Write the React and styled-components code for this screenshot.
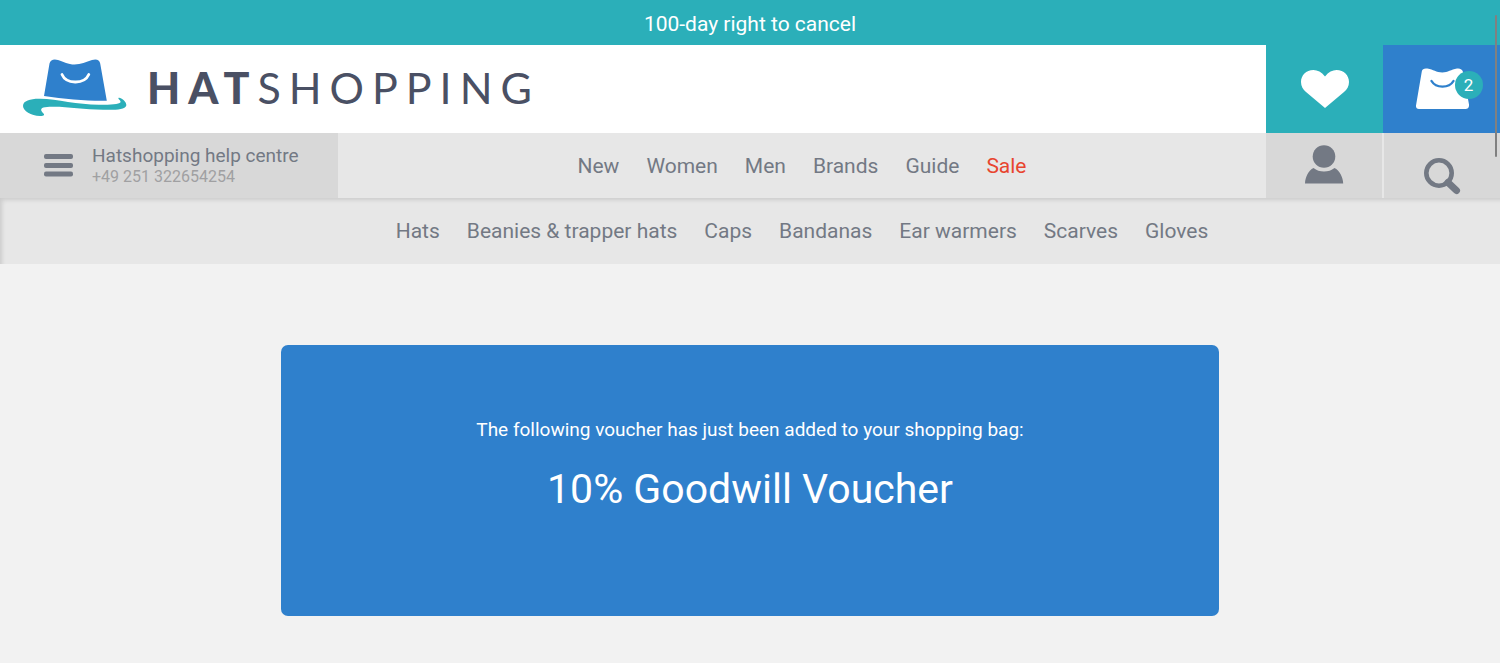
import React from "react";
import styled, { createGlobalStyle } from "styled-components";

const App = () => (
  <>
    <GlobalStyle />
    <Announcement>100-day right to cancel</Announcement>
    <Header>
      <Brand href="#" aria-label="Hatshopping">
        <HatLogo />
        <Wordmark>
          <b>HAT</b>SHOPPING
        </Wordmark>
      </Brand>
      <Tile color="#2bafb9" aria-label="Wishlist">
        <HeartIcon />
      </Tile>
      <Tile color="#2f80cc" aria-label="Shopping bag">
        <BagWrap>
          <BagIcon />
          <Count>2</Count>
        </BagWrap>
      </Tile>
    </Header>
    <Bar>
      <Help aria-label="Open menu">
        <MenuIcon />
        <span>
          <HelpTitle>Hatshopping help centre</HelpTitle>
          <HelpPhone>+49 251 322654254</HelpPhone>
        </span>
      </Help>
      <Nav aria-label="Main">
        {mainLinks.map(({ title, sale }) => (
          <NavLink key={title} href="#" $sale={sale}>
            {title}
          </NavLink>
        ))}
      </Nav>
      <Tools>
        <Tool aria-label="Account">
          <UserIcon />
        </Tool>
        <Tool aria-label="Search" $low>
          <SearchIcon />
        </Tool>
      </Tools>
    </Bar>
    <SubBar>
      <SubNav aria-label="Categories">
        {categories.map((title) => (
          <NavLink key={title} href="#">
            {title}
          </NavLink>
        ))}
      </SubNav>
    </SubBar>
    <Main>
      <Voucher>
        <Intro>The following voucher has just been added to your shopping bag:</Intro>
        <VoucherTitle>10% Goodwill Voucher</VoucherTitle>
      </Voucher>
    </Main>
    <ScrollThumb />
  </>
);
export default App;

const HatLogo = () => (
  <svg width="104" height="58" viewBox="0 0 104 58" aria-hidden="true">
    <path
      fill="#2f80cc"
      d="M26.500 4.500C27.500 .6 31 -.2 35 1C41 3 45 5.500 51.500 5.500C58 5.500 63 3 69 1C73.500 -.3 76.500 .8 77.200 4.500L83.800 41.800C66 42.300 42 40 21 37Z"
    />
    <path
      fill="none"
      stroke="#fff"
      strokeWidth="2.800"
      strokeLinecap="round"
      d="M39 15.500C43 25 61 26 65.800 15.500"
    />
    <path
      fill="#2bafb9"
      d="M0 47C0 41.500 8 39.600 17 39.800C35 40.200 55 46 77 45.800C88 45.800 96 45.400 97.500 43.300C98.300 41.600 95 40.600 95.400 39C96.600 37.400 104 42.500 103.300 46.500C102 51 92 51 80 50.800C58 50.600 38 46.500 22 48.300C17 49 17.500 51.500 20 54C22.500 56 20.500 57.200 17 57C8 56.500 0 52 0 47Z"
    />
  </svg>
);

const HeartIcon = () => (
  <svg width="50" height="38" viewBox="0 0 50 38" aria-hidden="true">
    <path
      fill="#fff"
      d="M25 6.500C21.500 2 17.500 0 13.500 0C6 0 1 5.500 1 12C1 16.500 3 19.500 6 22L25 38L44 22C47 19.500 49 16.500 49 12C49 5.500 44 0 36.500 0C32.500 0 28.500 2 25 6.500Z"
    />
  </svg>
);

const BagIcon = () => (
  <svg width="54" height="42" viewBox="0 0 54 42" aria-hidden="true">
    <path
      fill="#fff"
      d="M6.800 3.500C7.300 .8 9.500 .2 12.500 .6C18.500 1.500 21 4.500 27.300 4.500C33 4.500 36 1.500 42 .6C45 .2 47.500 1.500 48 4L54 36.500C54.300 39.500 53 41 50.500 41L4 41C1.800 41 .8 39.500 1 37.500Z"
    />
    <path
      fill="none"
      stroke="#2f80cc"
      strokeWidth="2.400"
      strokeLinecap="round"
      d="M16.500 13C21 20.500 34 20.500 38.500 13"
    />
  </svg>
);

const MenuIcon = () => (
  <svg width="30" height="24" viewBox="0 0 30 24" aria-hidden="true">
    <g fill="#737984">
      <rect width="29" height="5" y="0" rx="2" />
      <rect width="29" height="5" y="9" rx="2" />
      <rect width="29" height="5" y="17.500" rx="2" />
    </g>
  </svg>
);

const UserIcon = () => (
  <svg width="40" height="39" viewBox="0 0 40 39" aria-hidden="true">
    <g fill="#737984">
      <circle cx="20" cy="11.500" r="11.300" />
      <path d="M1 38.500C1.200 32 4.500 25.500 9.500 23C12.500 25.500 16 26.500 20 26.500C24 26.500 27.500 25.500 30.500 23C35.500 25.500 39 32 39.200 38.500Z" />
    </g>
  </svg>
);

const SearchIcon = () => (
  <svg width="38" height="37" viewBox="0 0 38 37" aria-hidden="true">
    <g fill="none" stroke="#737984">
      <circle cx="16" cy="15" r="12.700" strokeWidth="4.600" />
      <path d="M25 24.500L33.500 32.500" strokeWidth="7" strokeLinecap="round" />
    </g>
  </svg>
);

const GlobalStyle = createGlobalStyle`
  * {
    box-sizing: border-box;
  }

  body {
    margin: 0;
    background: #f2f2f2;
    font-family: Roboto, "Liberation Sans", sans-serif;
  }

  button {
    border: 0;
    padding: 0;
    font: inherit;
    cursor: pointer;
  }

  svg {
    display: block;
    flex-shrink: 0;
  }
`;

const Announcement = styled.div`
  padding: 12px 0 9px;
  background: #2bafb9;
  color: white;
  font-size: 21px;
  line-height: 24px;
  text-align: center;
`;

const Header = styled.header`
  display: flex;
  min-height: 88px;
  background: white;
`;

const Brand = styled.a`
  display: flex;
  flex: 1;
  align-items: center;
  gap: 20px;
  padding: 0 0 2px 23px;
  color: #4a5064;
  text-decoration: none;
`;

const Wordmark = styled.span`
  font-family: Lato, "Liberation Sans", sans-serif;
  font-size: 43px;
  font-weight: 400;
  line-height: 48px;
  letter-spacing: 8px;

  b {
    font-weight: 900;
  }
`;

const Tile = styled.button`
  display: flex;
  width: 117px;
  align-items: center;
  justify-content: center;
  background: ${({ color }) => color};
`;

const BagWrap = styled.span`
  position: relative;
`;

const Count = styled.span`
  position: absolute;
  top: 3px;
  right: -14px;
  width: 28px;
  border-radius: 50%;
  background: #2bafb9;
  color: white;
  font-size: 17px;
  line-height: 28px;
  text-align: center;
`;

const Bar = styled.div`
  display: grid;
  grid-template-columns: 338px 1fr 234px;
  min-height: 65px;
  background: #e7e7e7;
`;

const Help = styled.button`
  display: flex;
  align-items: center;
  gap: 18px;
  padding-left: 44px;
  background: #d8d8d8;
  text-align: left;
`;

const HelpTitle = styled.span`
  display: block;
  color: #737984;
  font-size: 19px;
  line-height: 22px;
`;

const HelpPhone = styled.span`
  display: block;
  color: #a0a0a2;
  font-size: 16px;
  line-height: 20px;
`;

const Nav = styled.nav`
  display: flex;
  align-items: center;
  justify-content: center;
  gap: 27px;
`;

const NavLink = styled.a`
  color: ${({ $sale }) => ($sale ? "#e8452f" : "#737984")};
  font-size: 21px;
  line-height: 24px;
  text-decoration: none;
  white-space: nowrap;
`;

const Tools = styled.div`
  display: grid;
  grid-template-columns: 1fr 1fr;
  gap: 2px;
`;

const Tool = styled.button`
  display: flex;
  align-items: ${({ $low }) => ($low ? "flex-end" : "center")};
  justify-content: center;
  padding-bottom: 3px;
  background: #d8d8d8;
`;

const SubBar = styled.div`
  display: grid;
  grid-template-columns: 338px 1fr 234px;
  min-height: 66px;
  background: #e7e7e7;
  box-shadow: inset 4px 4px 4px -2px rgba(0, 0, 0, 0.12);
`;

const SubNav = styled(Nav)`
  grid-column: 2;
`;

const Main = styled.main`
  padding: 81px 0 47px;
`;

const Voucher = styled.section`
  width: 62.5%;
  margin: 0 auto;
  padding: 72px 24px 101px;
  border-radius: 7px;
  background: #2f80cc;
  color: white;
  text-align: center;
`;

const Intro = styled.p`
  margin: 0 0 20px;
  font-size: 19px;
  line-height: 26px;
`;

const VoucherTitle = styled.h1`
  margin: 0;
  font-size: 41px;
  font-weight: 400;
  line-height: 52px;
`;

const ScrollThumb = styled.div`
  position: absolute;
  top: 15px;
  right: 3px;
  width: 2px;
  height: 142px;
  border-radius: 1px;
  background: #808080;
`;

const mainLinks = [
  { title: "New" },
  { title: "Women" },
  { title: "Men" },
  { title: "Brands" },
  { title: "Guide" },
  { title: "Sale", sale: true },
];

const categories = [
  "Hats",
  "Beanies & trapper hats",
  "Caps",
  "Bandanas",
  "Ear warmers",
  "Scarves",
  "Gloves",
];
